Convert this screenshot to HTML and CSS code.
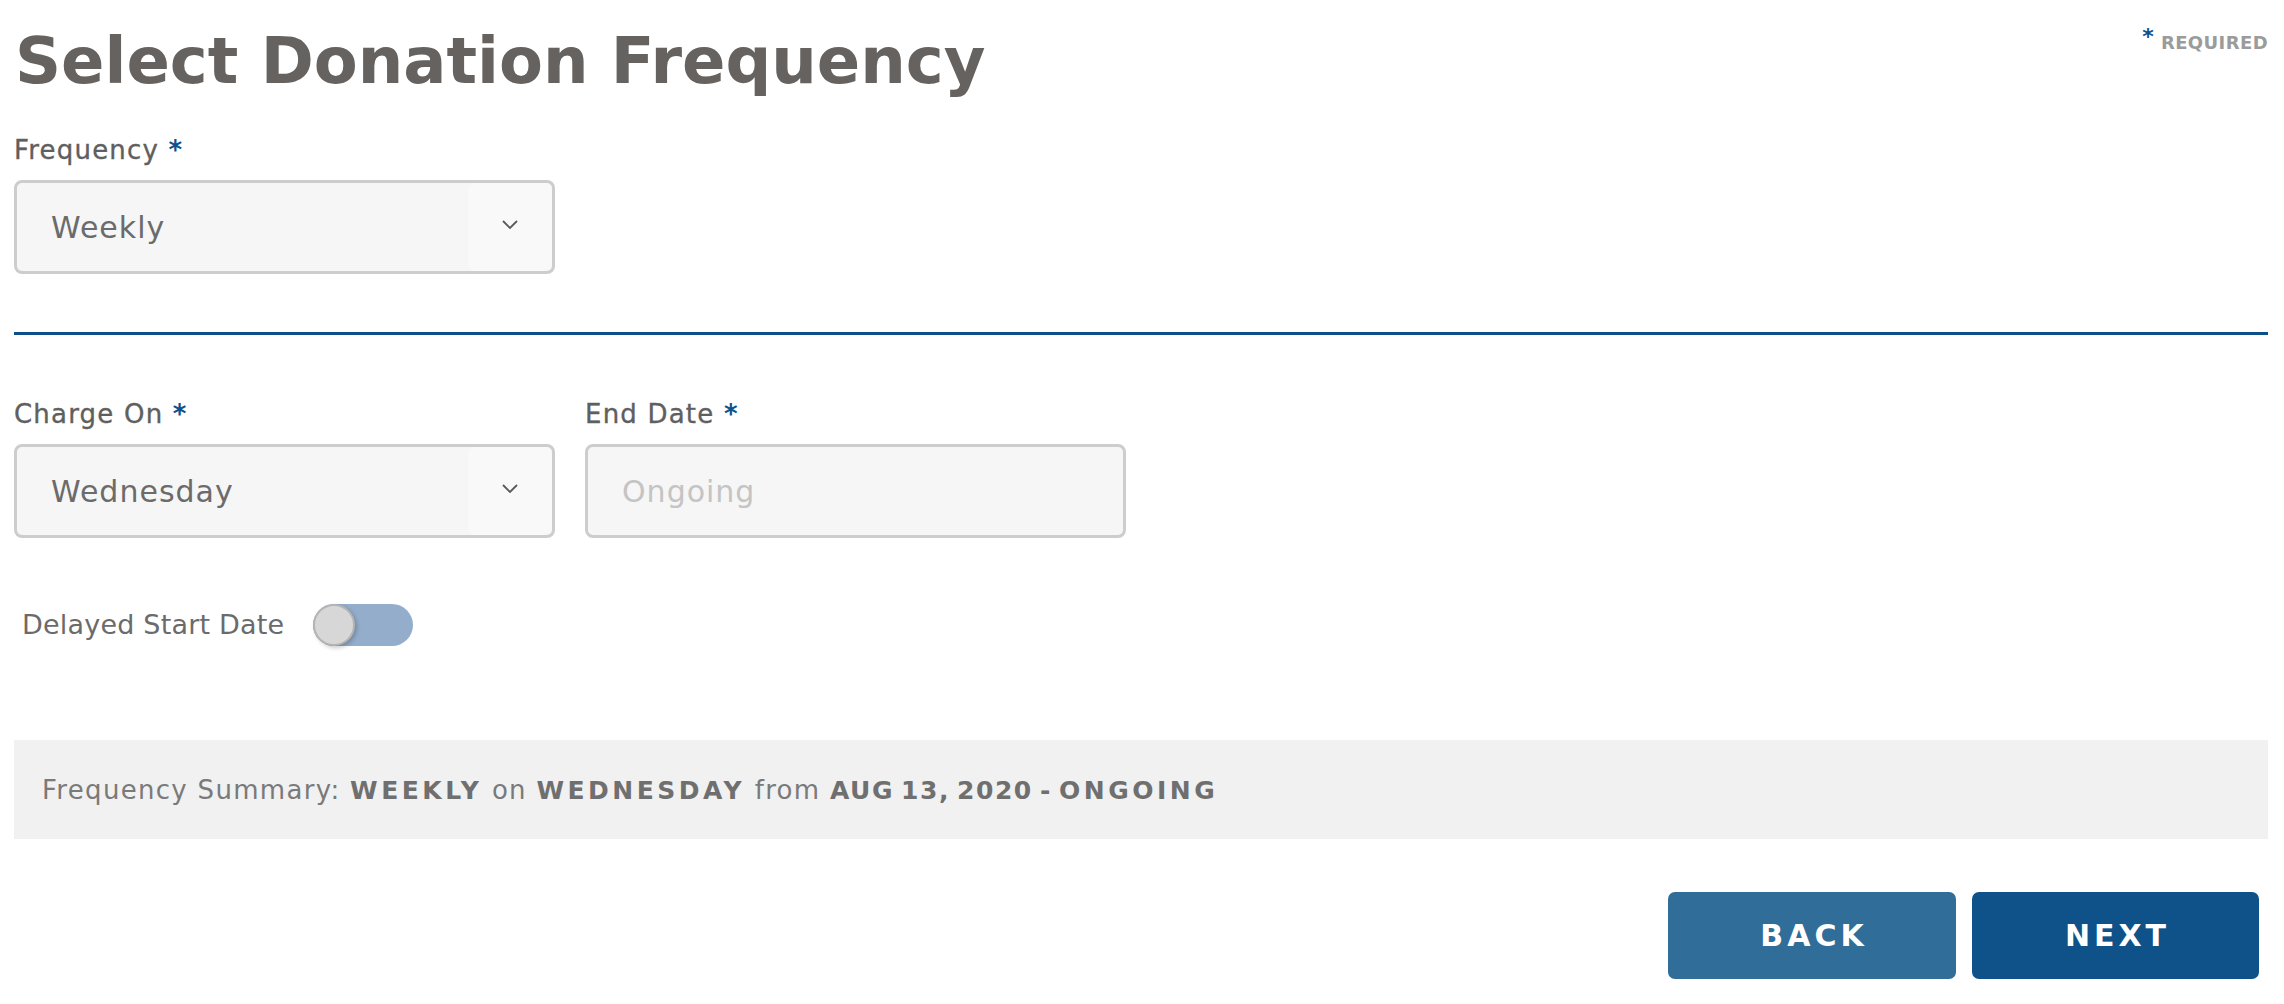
FILE: index.html
```
<!DOCTYPE html>
<html lang="en">
<head>
<meta charset="utf-8">
<title>Select Donation Frequency</title>
<link rel="stylesheet" href="styles.css">
</head>
<body>
<div class="page">
  <header class="head">
    <h1 class="title">Select Donation Frequency</h1>
    <div class="required"><span class="req-ast">*</span> REQUIRED</div>
  </header>

  <div class="field field-first">
    <label class="label">Frequency <span class="ast">*</span></label>
    <div class="select">
      <span class="value">Weekly</span>
      <span class="arrow"><svg width="16" height="9" viewBox="0 0 16 9"><polyline points="1,1 8,8 15,1" fill="none" stroke="#5a5a5a" stroke-width="1.8"/></svg></span>
    </div>
  </div>

  <div class="divider"></div>

  <div class="row">
    <div class="field">
      <label class="label">Charge On <span class="ast">*</span></label>
      <div class="select">
        <span class="value">Wednesday</span>
        <span class="arrow"><svg width="16" height="9" viewBox="0 0 16 9"><polyline points="1,1 8,8 15,1" fill="none" stroke="#5a5a5a" stroke-width="1.8"/></svg></span>
      </div>
    </div>
    <div class="field">
      <label class="label">End Date <span class="ast">*</span></label>
      <div class="select">
        <span class="value placeholder">Ongoing</span>
      </div>
    </div>
  </div>

  <div class="toggle-row">
    <span class="toggle-label">Delayed Start Date</span>
    <span class="toggle"><span class="knob"></span></span>
  </div>

  <div class="summary">
    <span>Frequency Summary: <b>WEEKLY</b> on <b>WEDNESDAY</b> from <b class="date">AUG 13, 2020 - </b><b>ONGOING</b></span>
  </div>

  <div class="actions">
    <button class="btn btn-back">BACK</button>
    <button class="btn btn-next">NEXT</button>
  </div>
</div>
</body>
</html>
```
FILE: styles.css
```
html, body {
  margin: 0;
  background: #ffffff;
}
body {
  font-family: "DejaVu Sans", "Liberation Sans", sans-serif;
}
.page {
  padding: 23px 16px 0 14px;
}
.head {
  display: flex;
  justify-content: space-between;
  align-items: flex-start;
}
.title {
  margin: 0;
  font-size: 64px;
  line-height: 76px;
  font-weight: 700;
  color: #66625f;
  padding-left: 1px;
}
.required {
  margin-top: 4px;
  font-size: 18px;
  line-height: 20px;
  font-weight: 700;
  color: #9b9b9b;
  letter-spacing: 0.4px;
}
.req-ast {
  color: #0f528b;
  font-size: 22px;
  vertical-align: 5px;
}
.field-first {
  margin-top: 36px;
}
.label {
  display: block;
  font-size: 26px;
  line-height: 30px;
  color: #5f5f5f;
  letter-spacing: 1.2px;
  -webkit-text-stroke: 0.35px #5f5f5f;
  margin-bottom: 15px;
}
.ast {
  color: #0f528b;
  font-weight: 700;
  letter-spacing: 0;
  -webkit-text-stroke: 0;
}
.select {
  width: 541px;
  height: 94px;
  box-sizing: border-box;
  border: 3px solid #cdcdcd;
  border-radius: 8px;
  background: #f6f6f6;
  display: flex;
  align-items: stretch;
}
.value {
  flex: 1;
  display: flex;
  align-items: center;
  padding-left: 34px;
  font-size: 30px;
  color: #6b6b6b;
  letter-spacing: 1px;
}
.placeholder {
  color: #c4c4c4;
}
.arrow {
  width: 84px;
  display: flex;
  align-items: center;
  justify-content: center;
  background: #f9f9f9;
  border-radius: 8px;
}
.arrow svg {
  margin-top: -5px;
}
.divider {
  margin-top: 58px;
  height: 3px;
  background: #0d5089;
}
.row {
  margin-top: 64px;
  display: flex;
  gap: 30px;
}
.toggle-row {
  margin-top: 66px;
  display: flex;
  align-items: center;
  gap: 29px;
  padding-left: 8px;
}
.toggle-label {
  font-size: 27px;
  line-height: 32px;
  color: #6b6b6b;
  letter-spacing: 0.2px;
}
.toggle {
  width: 100px;
  height: 42px;
  border-radius: 21px;
  background: #93adcb;
  display: flex;
}
.knob {
  width: 42px;
  height: 42px;
  box-sizing: border-box;
  border-radius: 50%;
  border: 2px solid #b5b5b5;
  background: #d7d7d7;
  box-shadow: 2px 2px 4px rgba(0, 0, 0, 0.2);
}
.summary {
  margin-top: 94px;
  height: 99px;
  background: #f1f1f1;
  display: flex;
  align-items: center;
  padding-left: 28px;
  font-size: 26px;
  color: #7a7a7a;
  letter-spacing: 1.3px;
}
.summary b {
  font-size: 25px;
  font-weight: 700;
  color: #6f6f6f;
  letter-spacing: 3.5px;
}
.summary b.date {
  letter-spacing: 1.5px;
  word-spacing: -3px;
}
.actions {
  margin-top: 53px;
  display: flex;
  justify-content: flex-end;
  gap: 16px;
  padding-right: 9px;
}
.btn {
  width: 288px;
  height: 87px;
  border: none;
  border-radius: 7px;
  font-family: "DejaVu Sans", "Liberation Sans", sans-serif;
  font-size: 30px;
  font-weight: 700;
  letter-spacing: 4px;
  padding: 0 0 0 4px;
  color: #ffffff;
}
.btn-back {
  background: #306d99;
}
.btn-next {
  width: 287px;
  background: #0e5289;
}
```
